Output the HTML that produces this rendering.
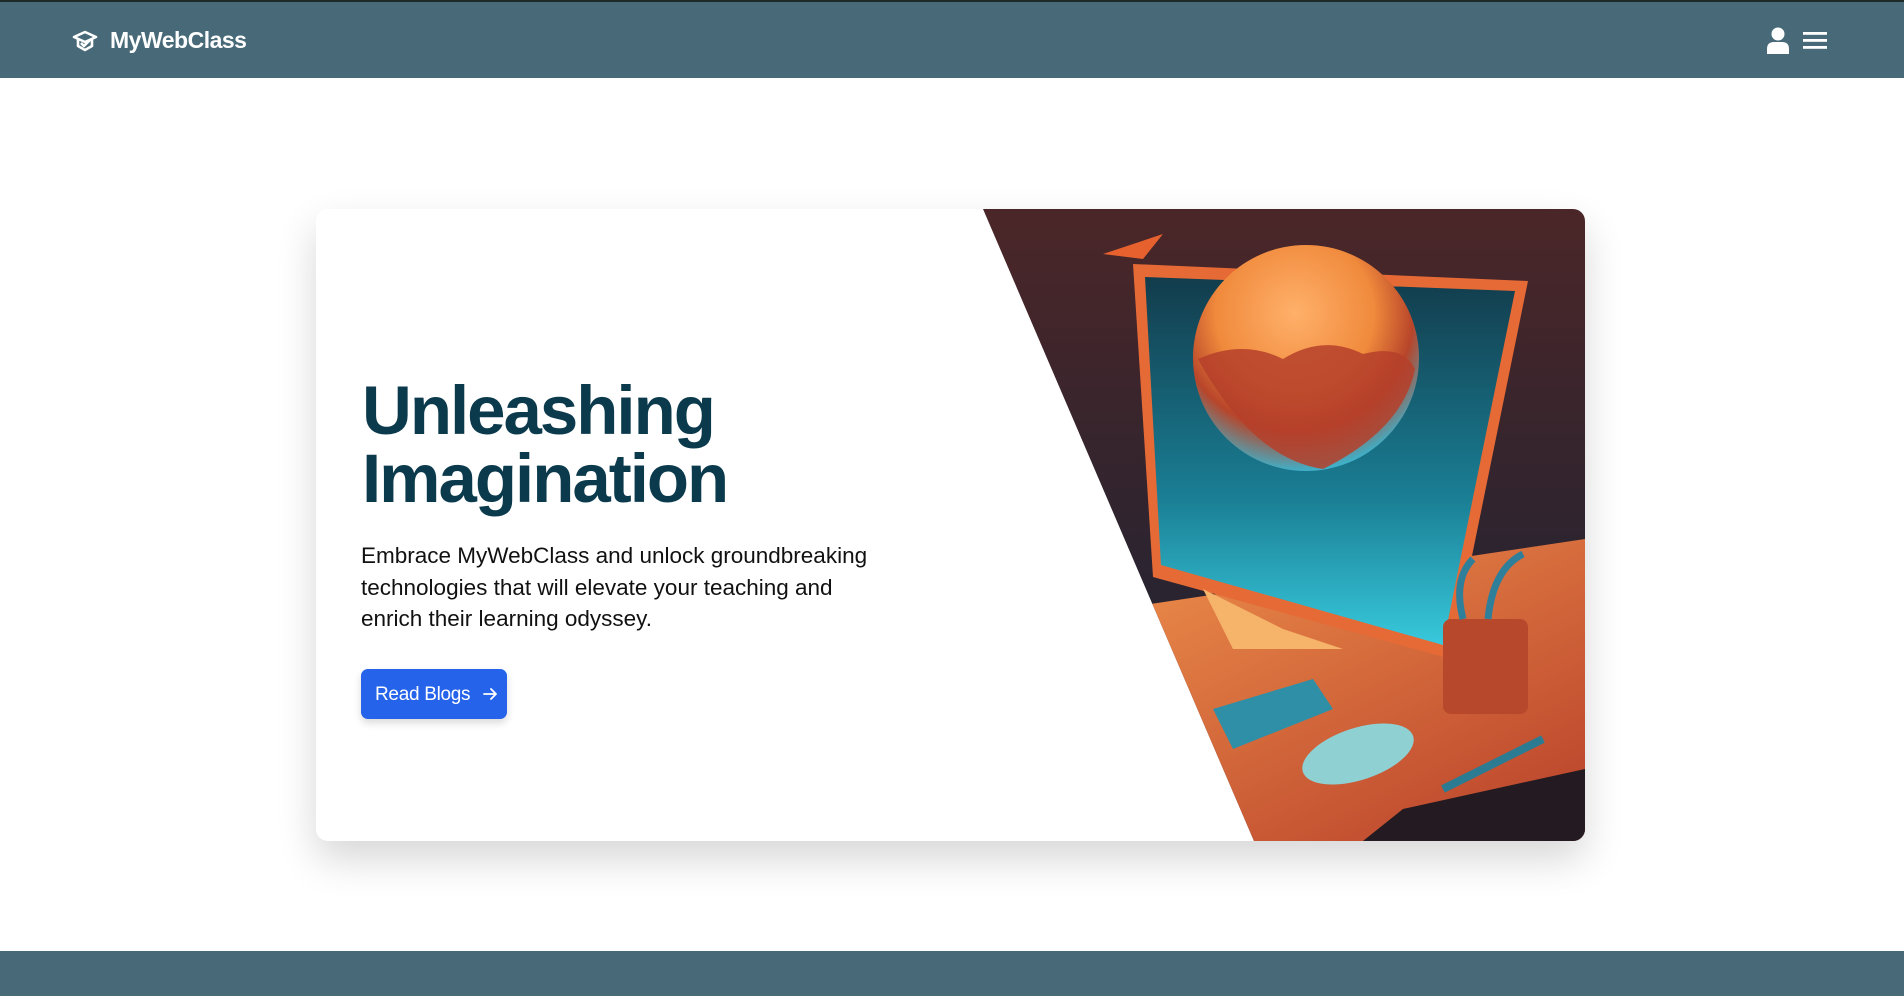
<!DOCTYPE html>
<html><head><meta charset="utf-8"><style>
*{margin:0;padding:0;box-sizing:border-box}
html,body{width:1904px;height:996px;overflow:hidden;background:#fff;font-family:"Liberation Sans",sans-serif}
.hdr{position:absolute;left:0;top:0;width:1904px;height:78px;background:#486a78;border-top:2px solid #1c2a2a}
.logo{position:absolute;left:72px;top:25px;display:flex;align-items:center;color:#fff;font-weight:bold;font-size:23px;letter-spacing:-0.5px}
.logo svg{margin-right:12px}
.card{position:absolute;left:316px;top:209px;width:1269px;height:632px;background:#fff;border-radius:12px;box-shadow:0 18px 40px rgba(0,0,0,0.16);overflow:hidden}
h1{position:absolute;left:46px;top:168px;font-size:69px;line-height:68px;color:#0b3a4c;font-weight:900;letter-spacing:-2px}
p{position:absolute;left:45px;top:331px;width:530px;font-size:22.5px;line-height:31.5px;color:#111}
.btn{position:absolute;left:45px;top:460px;width:146px;height:50px;background:#2563eb;border-radius:7px;color:#fff;font-size:19px;line-height:52px;padding-left:14px;letter-spacing:-0.3px;box-shadow:0 4px 8px rgba(0,0,0,0.15)}
.btn svg{position:absolute;left:122px;top:18px}
.ft{position:absolute;left:0;top:951px;width:1904px;height:45px;background:#486a78}
</style></head><body>
<div class="hdr">
 <div class="logo"><svg width="26" height="24" viewBox="0 0 26 24" fill="none" stroke="#fff" stroke-width="2.6" stroke-linejoin="round"><path d="M2 8 L13 3 L24 8 L13 13 Z"/><path d="M6 10 V17 L13 21 L20 17 V10"/><path d="M9 14 L12 17 L18 11"/></svg>MyWebClass</div>
 <svg style="position:absolute;left:1766px;top:25px" width="24" height="27" viewBox="0 0 24 27" fill="#fff"><circle cx="12" cy="7" r="6.5"/><path d="M1 27 V22 Q1 15 8 15 H16 Q23 15 23 22 V27 Z"/></svg>
 <svg style="position:absolute;left:1803px;top:30px" width="24" height="18" viewBox="0 0 24 18" fill="#fff"><rect y="0" width="24" height="2.8"/><rect y="7" width="24" height="2.8"/><rect y="14" width="24" height="2.8"/></svg>
</div>
<div class="card">
 <h1>Unleashing<br>Imagination</h1>
 <p>Embrace MyWebClass and unlock groundbreaking technologies that will elevate your teaching and enrich their learning odyssey.</p>
 <div class="btn">Read Blogs <svg width="14" height="14" viewBox="0 0 14 14" fill="none" stroke="#fff" stroke-width="1.8" stroke-linecap="round" stroke-linejoin="round"><path d="M1 7 H13 M8 2 L13 7 L8 12"/></svg></div>
 <svg style="position:absolute;left:667px;top:0" width="602" height="632" viewBox="0 0 602 632">
  <defs>
   <clipPath id="c"><path d="M0 0 H602 V632 H271 Z"/></clipPath>
   <linearGradient id="bg" x1="0" y1="0" x2="0" y2="1"><stop offset="0" stop-color="#4b2628"/><stop offset="0.6" stop-color="#2a2430"/><stop offset="1" stop-color="#1f1b26"/></linearGradient>
   <linearGradient id="scr" x1="0" y1="0" x2="0" y2="1"><stop offset="0" stop-color="#123c4c"/><stop offset="0.6" stop-color="#1a7e94"/><stop offset="1" stop-color="#38c9dc"/></linearGradient>
   <radialGradient id="sp" cx="0.45" cy="0.3" r="0.7"><stop offset="0" stop-color="#ffb06a"/><stop offset="0.5" stop-color="#f08a3c"/><stop offset="0.75" stop-color="#b8452a"/><stop offset="1" stop-color="#3fb0c8"/></radialGradient>
   <linearGradient id="dk" x1="0" y1="0" x2="1" y2="1"><stop offset="0" stop-color="#f59a50"/><stop offset="1" stop-color="#b8402a"/></linearGradient>
  </defs>
  <g clip-path="url(#c)">
   <rect width="602" height="632" fill="url(#bg)"/>
   <path d="M0 420 L602 330 V632 H0 Z" fill="url(#dk)"/>
   <path d="M420 600 L602 560 V632 H380 Z" fill="#241a22"/>
   <path d="M150 55 L545 72 L468 450 L170 368 Z" fill="#e56a36"/>
   <path d="M162 68 L532 82 L460 436 L178 356 Z" fill="url(#scr)"/>
   <path d="M220 380 L300 420 L360 440 L250 440 Z" fill="#f6b46a"/>
   <circle cx="323" cy="149" r="113" fill="url(#sp)"/>
   <path d="M215 150 Q260 130 300 150 Q340 125 380 145 Q420 135 432 160 Q420 220 340 260 Q270 250 215 150 Z" fill="#b5402a" opacity="0.85"/>
   <rect x="460" y="410" width="85" height="95" rx="8" fill="#b8482c"/>
   <path d="M480 410 Q470 370 490 350 M505 410 Q510 360 540 345" stroke="#2f7f9a" stroke-width="7" fill="none"/>
   <ellipse cx="375" cy="545" rx="58" ry="26" fill="#8fd1d2" transform="rotate(-18 375 545)"/>
   <path d="M460 580 L560 530" stroke="#2b7c92" stroke-width="8"/>
   <path d="M230 500 L330 470 L350 500 L250 540 Z" fill="#2e8fa6"/>
   <path d="M120 45 L180 25 L160 50 Z" fill="#e6612e"/>
  </g>
 </svg>
</div>
<div class="ft"></div>
</body></html>
